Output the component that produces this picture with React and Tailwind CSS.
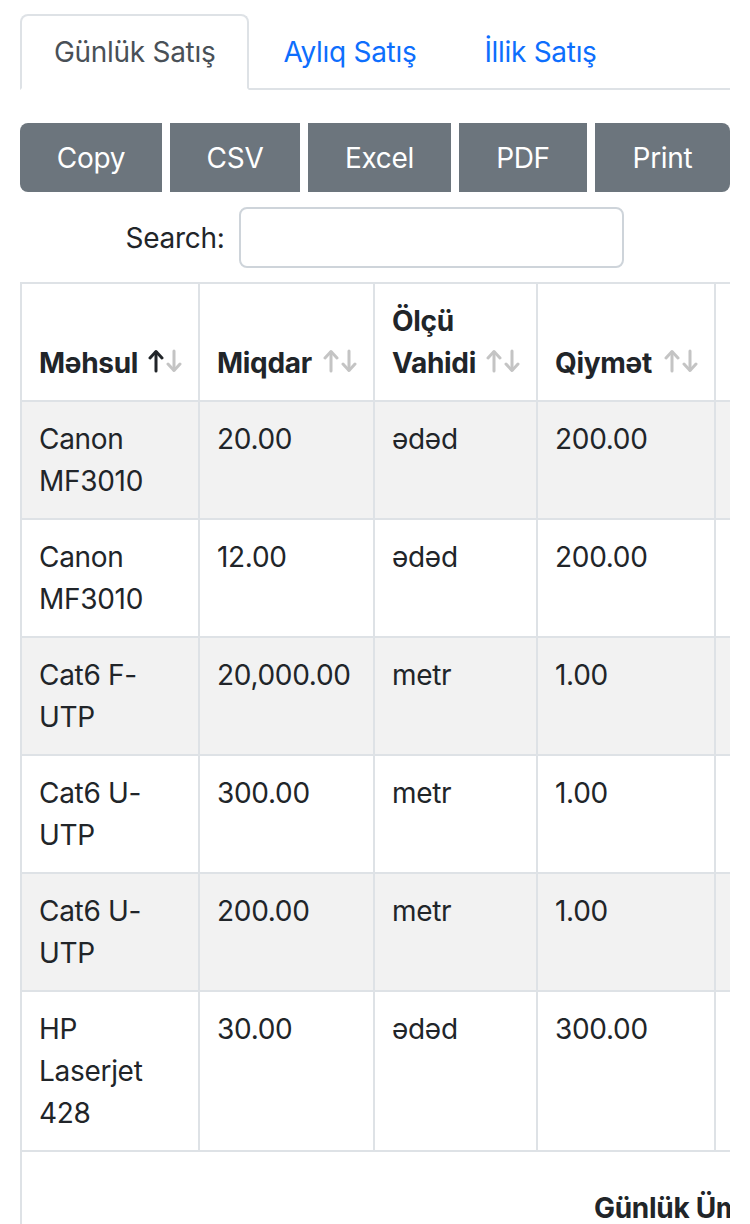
import React from "react";

const rows = [
  { name: ["Canon", "MF3010"], qty: "20.00", unit: "ədəd", price: "200.00" },
  { name: ["Canon", "MF3010"], qty: "12.00", unit: "ədəd", price: "200.00" },
  { name: ["Cat6 F-", "UTP"], qty: "20,000.00", unit: "metr", price: "1.00" },
  { name: ["Cat6 U-", "UTP"], qty: "300.00", unit: "metr", price: "1.00" },
  { name: ["Cat6 U-", "UTP"], qty: "200.00", unit: "metr", price: "1.00" },
  { name: ["HP", "Laserjet", "428"], qty: "30.00", unit: "ədəd", price: "300.00" },
];

function SortIcon({ active }) {
  return (
    <svg
      width="34"
      height="24"
      viewBox="0 0 34 24"
      fill="none"
      strokeWidth="3"
      strokeLinecap="round"
      strokeLinejoin="round"
      className="absolute right-[16px] bottom-[27px]"
    >
      {/* up */}
      <g stroke={active ? "#212529" : "#c4c4c4"}>
        <path d="M8 3 L8 22" />
        <path d="M2 9 L8 2.5 L14 9" />
      </g>
      {/* down */}
      <g stroke="#c4c4c4">
        <path d="M26 2 L26 21" />
        <path d="M20 15 L26 21.5 L32 15" />
      </g>
    </svg>
  );
}

function Th({ children, active, icon = true }) {
  return (
    <th className="relative align-bottom text-left font-bold px-[17px] pr-[45px] py-[16px] border-t-2 border-b-2 border-l-2 border-[#dee2e6]">
      {children}
      {icon && <SortIcon active={active} />}
    </th>
  );
}

export default function App() {
  const buttons = [
    { label: "Copy", w: "w-[142px]", extra: "rounded-l-[8px]" },
    { label: "CSV", w: "w-[130px]", extra: "" },
    { label: "Excel", w: "w-[143px]", extra: "" },
    { label: "PDF", w: "w-[128px]", extra: "" },
    { label: "Print", w: "w-[135px]", extra: "rounded-r-[8px]" },
  ];

  const td = "align-top px-[17px] py-[16px] border-l-2 border-b-2 border-[#dee2e6]";

  return (
    <div className="w-[750px] min-h-[1224px] bg-white px-[20px] pt-[14px] font-['Inter',_sans-serif] text-[28px] leading-[42px] tracking-[-0.3px] text-[#212529]">
      {/* Tabs */}
      <div className="flex border-b-2 border-[#dee2e6]">
        <div className="-mb-[2px] px-[32px] py-[15px] border-2 border-[#dee2e6] border-b-white rounded-t-[8px] bg-white text-[#495057]">
          Günlük Satış
        </div>
        <div className="-mb-[2px] px-[32px] py-[15px] border-2 border-transparent text-[#0d6efd]">
          Aylıq Satış
        </div>
        <div className="-mb-[2px] px-[32px] py-[15px] border-2 border-transparent text-[#0d6efd]">
          İllik Satış
        </div>
      </div>

      {/* Export buttons */}
      <div className="mt-[33px] flex gap-[8px]">
        {buttons.map((b) => (
          <button
            key={b.label}
            className={`${b.w} ${b.extra} h-[69px] flex items-center justify-center bg-[#6c757d] text-white`}
          >
            {b.label}
          </button>
        ))}
      </div>

      {/* Search */}
      <div className="mt-[15px] flex justify-center items-center gap-[15px]">
        <label>Search:</label>
        <input
          type="text"
          className="w-[385px] h-[61px] border-2 border-[#ced4da] rounded-[8px] px-[20px] outline-none"
        />
      </div>

      {/* Table */}
      <div className="mt-[14px] w-[710px] overflow-hidden">
        <table className="w-[900px] table-fixed border-separate border-spacing-0">
          <colgroup>
            <col className="w-[178px]" />
            <col className="w-[175px]" />
            <col className="w-[163px]" />
            <col className="w-[178px]" />
            <col className="w-[206px]" />
          </colgroup>
          <thead>
            <tr>
              <Th active>Məhsul</Th>
              <Th>Miqdar</Th>
              <Th>Ölçü Vahidi</Th>
              <Th>Qiymət</Th>
              <Th icon={false}></Th>
            </tr>
          </thead>
          <tbody>
            {rows.map((r, i) => (
              <tr key={i} className={i % 2 === 0 ? "bg-[#f2f2f2]" : "bg-white"}>
                <td className={td}>
                  {r.name.map((n, j) => (
                    <div key={j}>{n}</div>
                  ))}
                </td>
                <td className={td}>{r.qty}</td>
                <td className={td}>{r.unit}</td>
                <td className={td}>{r.price}</td>
                <td className={td}></td>
              </tr>
            ))}
          </tbody>
          <tfoot>
            <tr>
              <td
                colSpan={5}
                className="pl-[572px] pt-[35px] pb-[16px] border-l-2 border-[#dee2e6] font-bold whitespace-nowrap"
              >
                Günlük Ümumi Satış
              </td>
            </tr>
          </tfoot>
        </table>
      </div>
    </div>
  );
}
